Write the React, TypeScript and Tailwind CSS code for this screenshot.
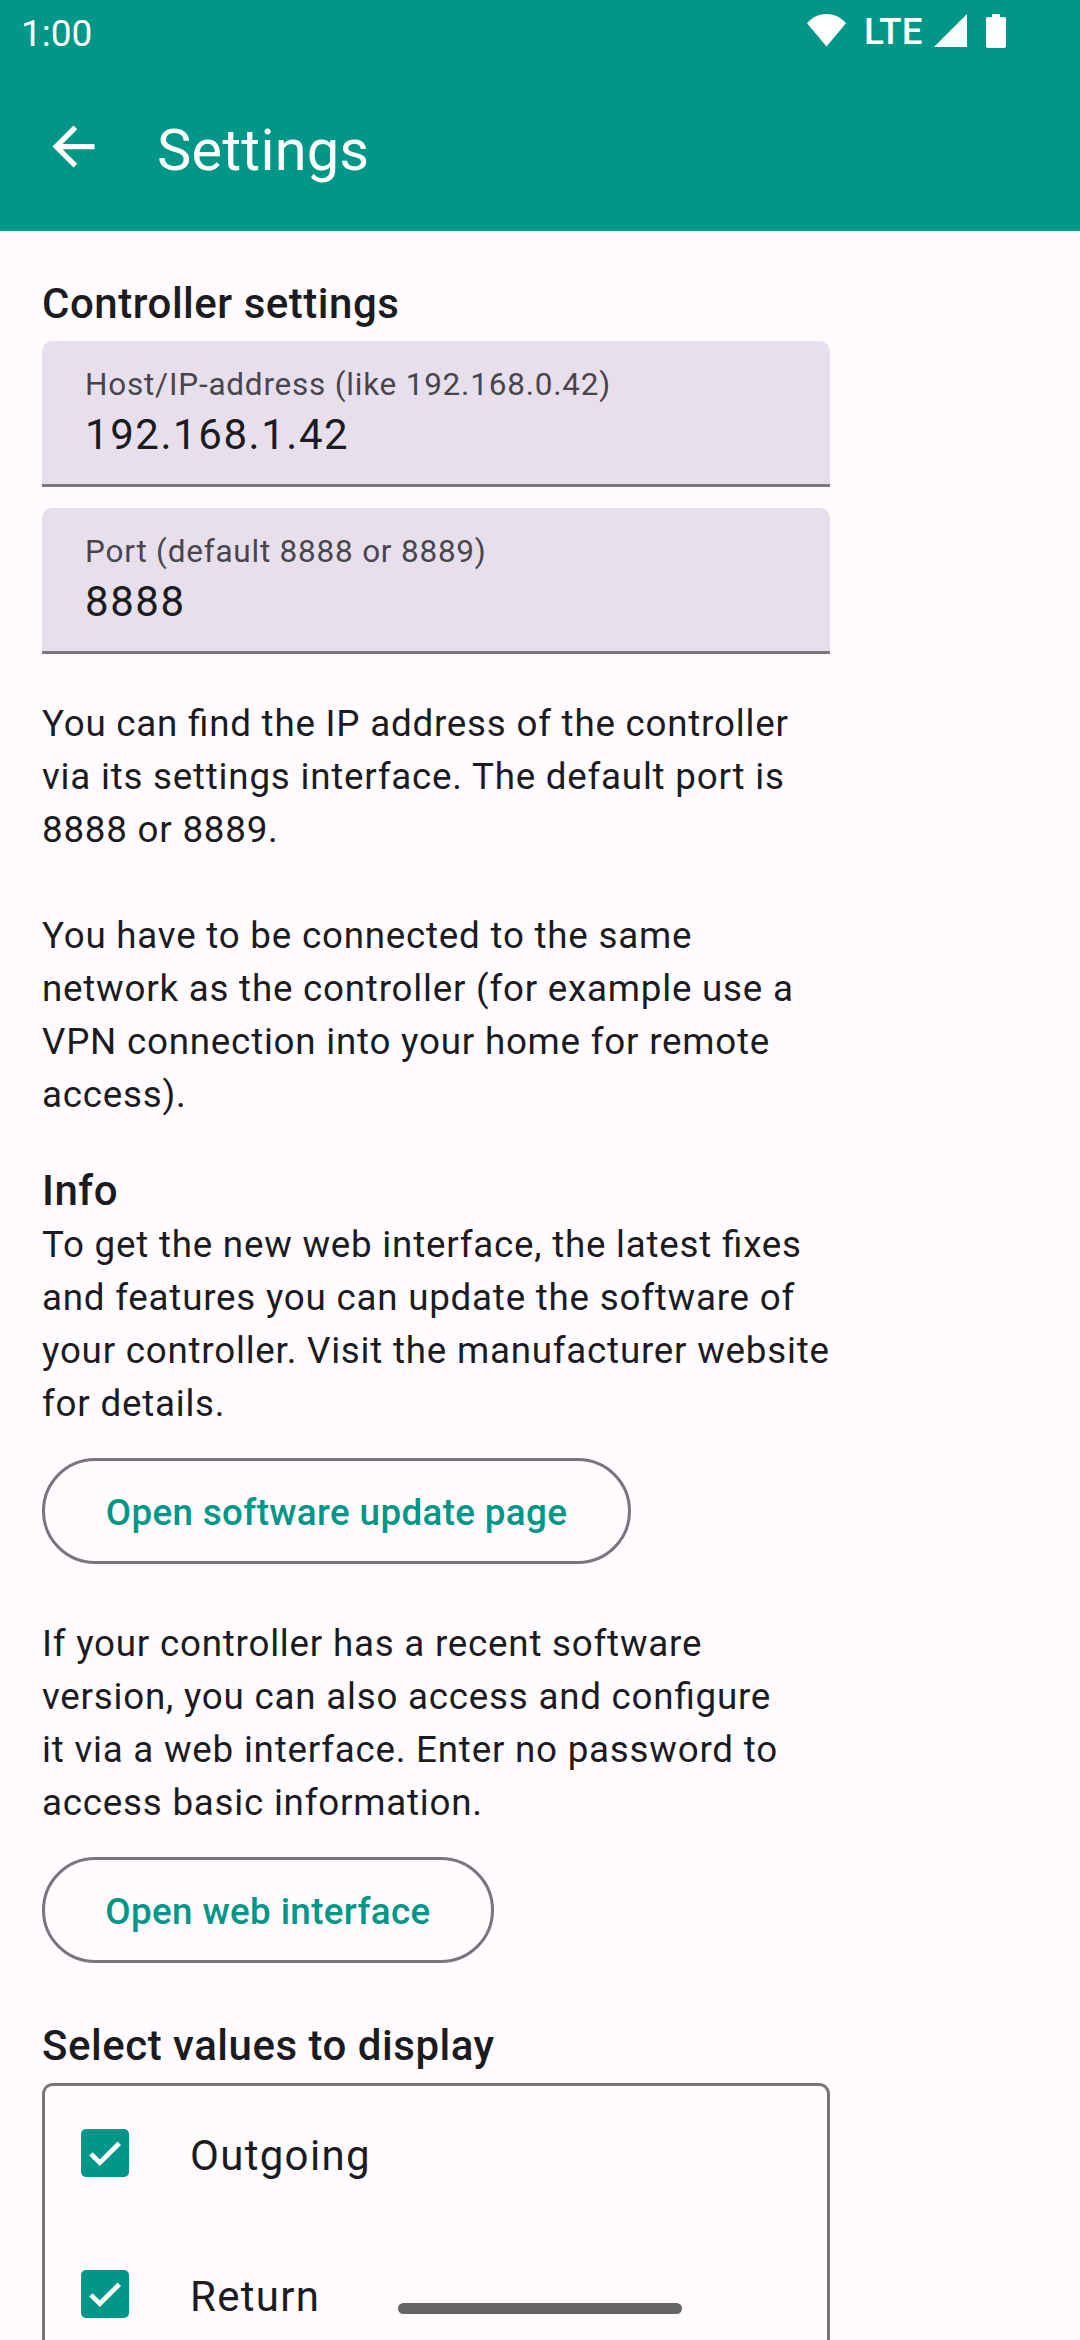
import type { ReactNode } from "react";

function StatusBar() {
  return (
    <div className="flex h-[66px] items-start justify-between pl-[21px] pr-[74px] text-white">
      <span className="mt-[12px] text-[37px] leading-[43px]">1:00</span>
      <div className="flex items-start">
        <svg className="mt-[13px] h-[34px] w-[40px]" viewBox="0 0 40 34" fill="currentColor">
          <path d="M19.500 33.500 0 10.200C5.500 4 12 1 19.500 1s14 3 19.500 9.200Z" />
        </svg>
        <span className="mt-[10px] w-[87px] pl-[17px] text-[36.750px] font-medium leading-[43px]">LTE</span>
        <svg className="mt-[14px] h-[33px] w-[33px]" viewBox="0 0 33 33" fill="currentColor">
          <path d="M0 33 33 0v33Z" />
        </svg>
        <svg className="ml-[19px] mt-[14px] h-[34px] w-[20px]" viewBox="0 0 20 34" fill="currentColor">
          <path d="M6 0h8v3h4a2 2 0 0 1 2 2v27a2 2 0 0 1-2 2H2a2 2 0 0 1-2-2V5a2 2 0 0 1 2-2h4Z" />
        </svg>
      </div>
    </div>
  );
}

function AppBar() {
  return (
    <div className="flex h-[165px] items-start text-white">
      <svg className="ml-[42px] mt-[49px] h-[63px] w-[63px]" viewBox="0 0 24 24" fill="currentColor">
        <path d="M20 11H7.830l5.590-5.590L12 4l-8 8 8 8 1.410-1.410L7.830 13H20v-2z" />
      </svg>
      <h1 className="ml-[52px] mt-[47px] text-[57.750px] leading-[74px] tracking-[0.180px]">Settings</h1>
    </div>
  );
}

function Heading({ className, children }: { className: string; children: ReactNode }) {
  return (
    <h2 className={`text-[42px] font-medium leading-[55px] tracking-[0.520px] ${className}`}>{children}</h2>
  );
}

function Field({ label, value, className }: { label: string; value: string; className: string }) {
  return (
    <div
      className={`h-[146px] rounded-t-[10.500px] bg-[#e7e0ec] px-[43px] pt-[25px] ${className} relative overflow-hidden`}
    >
      <div className="text-[31.500px] leading-[38px] tracking-[0.780px] text-[#49454f]">{label}</div>
      <div className="text-[42px] leading-[61px] tracking-[1.550px]">{value}</div>
      <div className="absolute inset-x-0 bottom-0 h-[3px] bg-[#7c757e]" />
    </div>
  );
}

function Paragraph({ lines, className }: { lines: string[]; className: string }) {
  return (
    <p
      className={`whitespace-nowrap text-[36.750px] leading-[53px] tracking-[0.770px] [font-feature-settings:'liga'_1] ${className}`}
    >
      {lines.map((line, i) => (
        <span key={i} className="block h-[53px]">
          {line}
        </span>
      ))}
    </p>
  );
}

function OutlinedButton({ className, children }: { className: string; children: ReactNode }) {
  return (
    <button
      className={`mt-[28px] block h-[106px] whitespace-nowrap rounded-full border-[3px] border-[#79747e] pt-[3px] text-center text-[36.750px] font-medium leading-[53px] tracking-[0.365px] text-[#009688] ${className}`}
    >
      {children}
    </button>
  );
}

function CheckRow({ label }: { label: string }) {
  return (
    <label className="flex h-[141px] items-start pl-[36px] pt-[43px]">
      <span className="flex size-[48px] items-center justify-center rounded-[5px] bg-[#009688]">
        <svg className="size-[48px]" viewBox="0 0 48 48" fill="none" stroke="#fff" strokeWidth="4.800">
          <path d="M9.900 24.900 18.800 33.700 38.300 14.300" />
        </svg>
      </span>
      <span className="ml-[61px] -mt-[5px] text-[42px] leading-[63px] tracking-[1.310px]">{label}</span>
    </label>
  );
}

export default function App() {
  return (
    <div className="relative h-[2340px] w-[1080px] overflow-hidden bg-[#fffbff] font-['Roboto',sans-serif] text-[#1c1b1f]">
      <header className="h-[231px] bg-[#009688]">
        <StatusBar />
        <AppBar />
      </header>
      <main className="w-[830px] pl-[42px] pt-[45px]">
        <Heading className="">Controller settings</Heading>
        <Field className="mt-[10px]" label="Host/IP-address (like 192.168.0.42)" value="192.168.1.42" />
        <Field className="mt-[21px]" label="Port (default 8888 or 8889)" value="8888" />
        <Paragraph
          className="mt-[43px]"
          lines={[
            "You can find the IP address of the controller",
            "via its settings interface. The default port is",
            "8888 or 8889.",
            "",
            "You have to be connected to the same",
            "network as the controller (for example use a",
            "VPN connection into your home for remote",
            "access).",
          ]}
        />
        <Heading className="mt-[42px]">Info</Heading>
        <Paragraph
          className=""
          lines={[
            "To get the new web interface, the latest fixes",
            "and features you can update the software of",
            "your controller. Visit the manufacturer website",
            "for details.",
          ]}
        />
        <OutlinedButton className="w-[589px]">Open software update page</OutlinedButton>
        <Paragraph
          className="mt-[53px]"
          lines={[
            "If your controller has a recent software",
            "version, you can also access and configure",
            "it via a web interface. Enter no password to",
            "access basic information.",
          ]}
        />
        <OutlinedButton className="w-[452px]">Open web interface</OutlinedButton>
        <Heading className="mt-[55px]">Select values to display</Heading>
        <div className="mt-[10px] h-[300px] rounded-t-[11px] border-[3px] border-b-0 border-[#787579]">
          <CheckRow label="Outgoing" />
          <CheckRow label="Return" />
        </div>
      </main>
      <div className="absolute bottom-[26px] left-[398px] h-[11px] w-[284px] rounded-full bg-[#666467]" />
    </div>
  );
}
